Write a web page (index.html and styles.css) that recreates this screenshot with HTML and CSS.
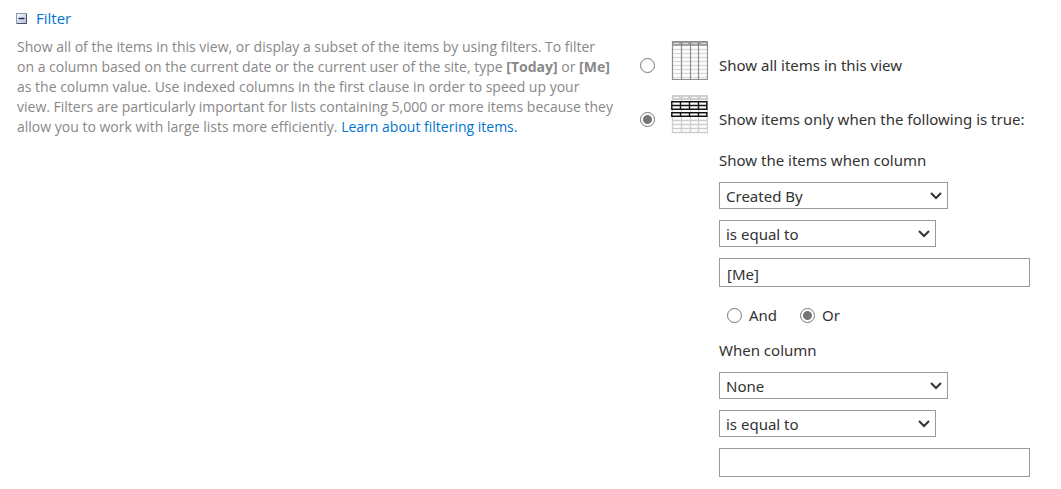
FILE: index.html
```html
<!DOCTYPE html>
<html lang="en">
<head>
<meta charset="utf-8">
<title>Filter</title>
<link rel="stylesheet" href="styles.css">
</head>
<body>
<form class="filter">
  <section class="intro">
    <h3 class="heading">
      <a class="link heading-link" href="#">
        <svg class="toggle" width="11" height="11" viewBox="0 0 11 11" aria-hidden="true">
          <defs><linearGradient id="face" x1="0" y1="0" x2="1" y2="1"><stop offset="0" stop-color="#fff"/><stop offset="1" stop-color="#aebbd0"/></linearGradient></defs>
          <rect x=".5" y=".5" width="10" height="10" fill="url(#face)" stroke="#8b9bb5"/>
          <path d="M10.500 1v9.500H1" fill="none" stroke="#46546f"/>
          <path d="M2.500 5.500h6" stroke="#1d2b49" stroke-width="1.400"/>
        </svg>
        <span>Filter</span>
      </a>
    </h3>
    <p class="description">Show all of the items in this view, or display a subset of the items by using filters. To filter on a column based on the current date or the current user of the site, type <b>[Today]</b> or <b>[Me]</b> as the column value. Use indexed columns in the first clause in order to speed up your view. Filters are particularly important for lists containing 5,000 or more items because they allow you to work with large lists more efficiently. <a class="link" href="#">Learn about filtering items.</a></p>
  </section>

  <section class="options">
    <div class="mode">
      <input class="radio" type="radio" name="mode" id="mode-all">
      <svg class="mode-icon" width="37" height="39" viewBox="0 0 37 39" aria-hidden="true">
        <path fill="#fff" d="M1 0h36v39H1z"/>
        <path d="M2 8.500h34M2 12.500h34M2 16.500h34M2 20.500h34M2 24.500h34M2 28.500h34M2 32.500h34M2 36.500h34" stroke="#dadada" stroke-width="1.500"/>
        <path fill="#a0a0a0" d="M1 0h36v5H1z"/>
        <path d="M3 3l1-1 1 1 1-1 1 1 1-1M12 3l1-1 1 1 1-1 1 1 1-1M21 3l1-1 1 1 1-1 1 1 1-1M30 3l1-1 1 1 1-1 1 1 1-1" fill="none" stroke="#dcdcdc"/>
        <path d="M1.500 .5h35v38h-35zM10.500 0v39M19.500 0v39M27.500 0v39" fill="none" stroke="#8e8e8e" stroke-width="1.200"/>
      </svg>
      <label for="mode-all">Show all items in this view</label>
    </div>
    <div class="mode">
      <input class="radio" type="radio" name="mode" id="mode-some" checked>
      <svg class="mode-icon" width="37" height="39" viewBox="0 0 37 39" aria-hidden="true">
        <path fill="#cfcfcf" d="M1 0h36v5H1z"/>
        <path d="M3 3l1-1 1 1 1-1 1 1 1-1M12 3l1-1 1 1 1-1 1 1 1-1M21 3l1-1 1 1 1-1 1 1 1-1M30 3l1-1 1 1 1-1 1 1 1-1" fill="none" stroke="#fff"/>
        <path d="M1.500 1v37M10.500 1v37M19.500 1v37M27.500 1v37M36.500 1v37M1 25.500h36M1 29.500h36M1 33.500h36M1 37.500h36" fill="none" stroke="#cecece" stroke-width="1.300"/>
        <path d="M.8 6.800h35v7.400h-35zM1 10.500h35M9.500 7v7M18.500 7v7M27.500 7v7M.8 17.800h35v3.400h-35zM9.500 18v3M18.500 18v3M27.500 18v3" fill="#fff" stroke="#111" stroke-width="1.400"/>
      </svg>
      <label for="mode-some">Show items only when the following is true:</label>
    </div>

    <div class="clauses">
      <label class="caption" for="column-1">Show the items when column</label>
      <div class="picker picker-wide">
        <select class="field" id="column-1"><option>Created By</option></select>
        <svg class="arrow" width="12" height="8" viewBox="0 0 12 8" aria-hidden="true"><path d="M1 1l5 5 5-5"/></svg>
      </div>
      <div class="picker">
        <select class="field" aria-label="First operator"><option>is equal to</option></select>
        <svg class="arrow" width="12" height="8" viewBox="0 0 12 8" aria-hidden="true"><path d="M1 1l5 5 5-5"/></svg>
      </div>
      <input class="field value" type="text" value="[Me]" aria-label="First value">
      <div class="joins">
        <label class="join"><input class="radio" type="radio" name="join">And</label>
        <label class="join"><input class="radio" type="radio" name="join" checked>Or</label>
      </div>
      <label class="caption" for="column-2">When column</label>
      <div class="picker picker-wide">
        <select class="field" id="column-2"><option>None</option></select>
        <svg class="arrow" width="12" height="8" viewBox="0 0 12 8" aria-hidden="true"><path d="M1 1l5 5 5-5"/></svg>
      </div>
      <div class="picker">
        <select class="field" aria-label="Second operator"><option>is equal to</option></select>
        <svg class="arrow" width="12" height="8" viewBox="0 0 12 8" aria-hidden="true"><path d="M1 1l5 5 5-5"/></svg>
      </div>
      <input class="field value" type="text" aria-label="Second value">
    </div>
  </section>
</form>
</body>
</html>
```
FILE: styles.css
```css
* {
  box-sizing: border-box;
}

body {
  margin: 0;
  background: #fff;
  color: #333;
  font: 15px/20px "Noto Sans", "Open Sans", sans-serif;
}

.filter {
  display: grid;
  grid-template-columns: minmax(0, 597fr) minmax(0, 390fr);
  column-gap: 26px;
  padding: 8px 31px 12px 17px;
}

.intro {
  padding-top: 1px;
  font-family: "Open Sans", "Noto Sans", sans-serif;
}

.heading {
  margin: 0 0 9px;
  font-size: 15px;
  line-height: 19px;
  font-weight: 400;
}

.heading-link {
  display: flex;
  align-items: center;
  gap: 9px;
  margin-left: -1px;
}

.link {
  color: #0075cf;
  text-decoration: none;
}

.description {
  margin: 0;
  color: #888;
  font-size: 14px;
}

.options {
  padding-top: 33px;
}

.mode {
  display: grid;
  grid-template-columns: 15px 37px 1fr;
  column-gap: 16px;
  align-items: center;
  margin-bottom: 15px;
}

.mode .radio {
  margin-top: 10px;
}

.mode label {
  margin-top: 8px;
  margin-left: -5px;
  white-space: nowrap;
}

.radio {
  appearance: none;
  width: 15px;
  height: 15px;
  margin: 0;
  border: 1px solid #767676;
  border-radius: 50%;
  background: #fff;
}

.radio:checked {
  background: radial-gradient(circle, #767676 4px, #fff 5px);
}

.clauses {
  display: flex;
  flex-direction: column;
  align-items: flex-start;
  gap: 11px;
  padding-left: 79px;
}

.caption {
  margin: 1px 0;
}

.picker {
  position: relative;
  width: 217px;
}

.picker-wide {
  width: 229px;
}

.field {
  display: block;
  width: 100%;
  height: 27px;
  padding: 1px 6px 0;
  appearance: none;
  border: 1px solid #999;
  border-radius: 0;
  background: #fff;
  color: #333;
  font: inherit;
}

.value {
  height: 29px;
  padding: 3px 7px 0;
}

.arrow {
  position: absolute;
  top: 10px;
  right: 6px;
  fill: none;
  stroke: #333;
  stroke-width: 2;
  pointer-events: none;
}

.joins {
  display: flex;
  gap: 23px;
  padding: 7px 8px 3px;
}

.join {
  display: flex;
  align-items: center;
  gap: 7px;
}
```
